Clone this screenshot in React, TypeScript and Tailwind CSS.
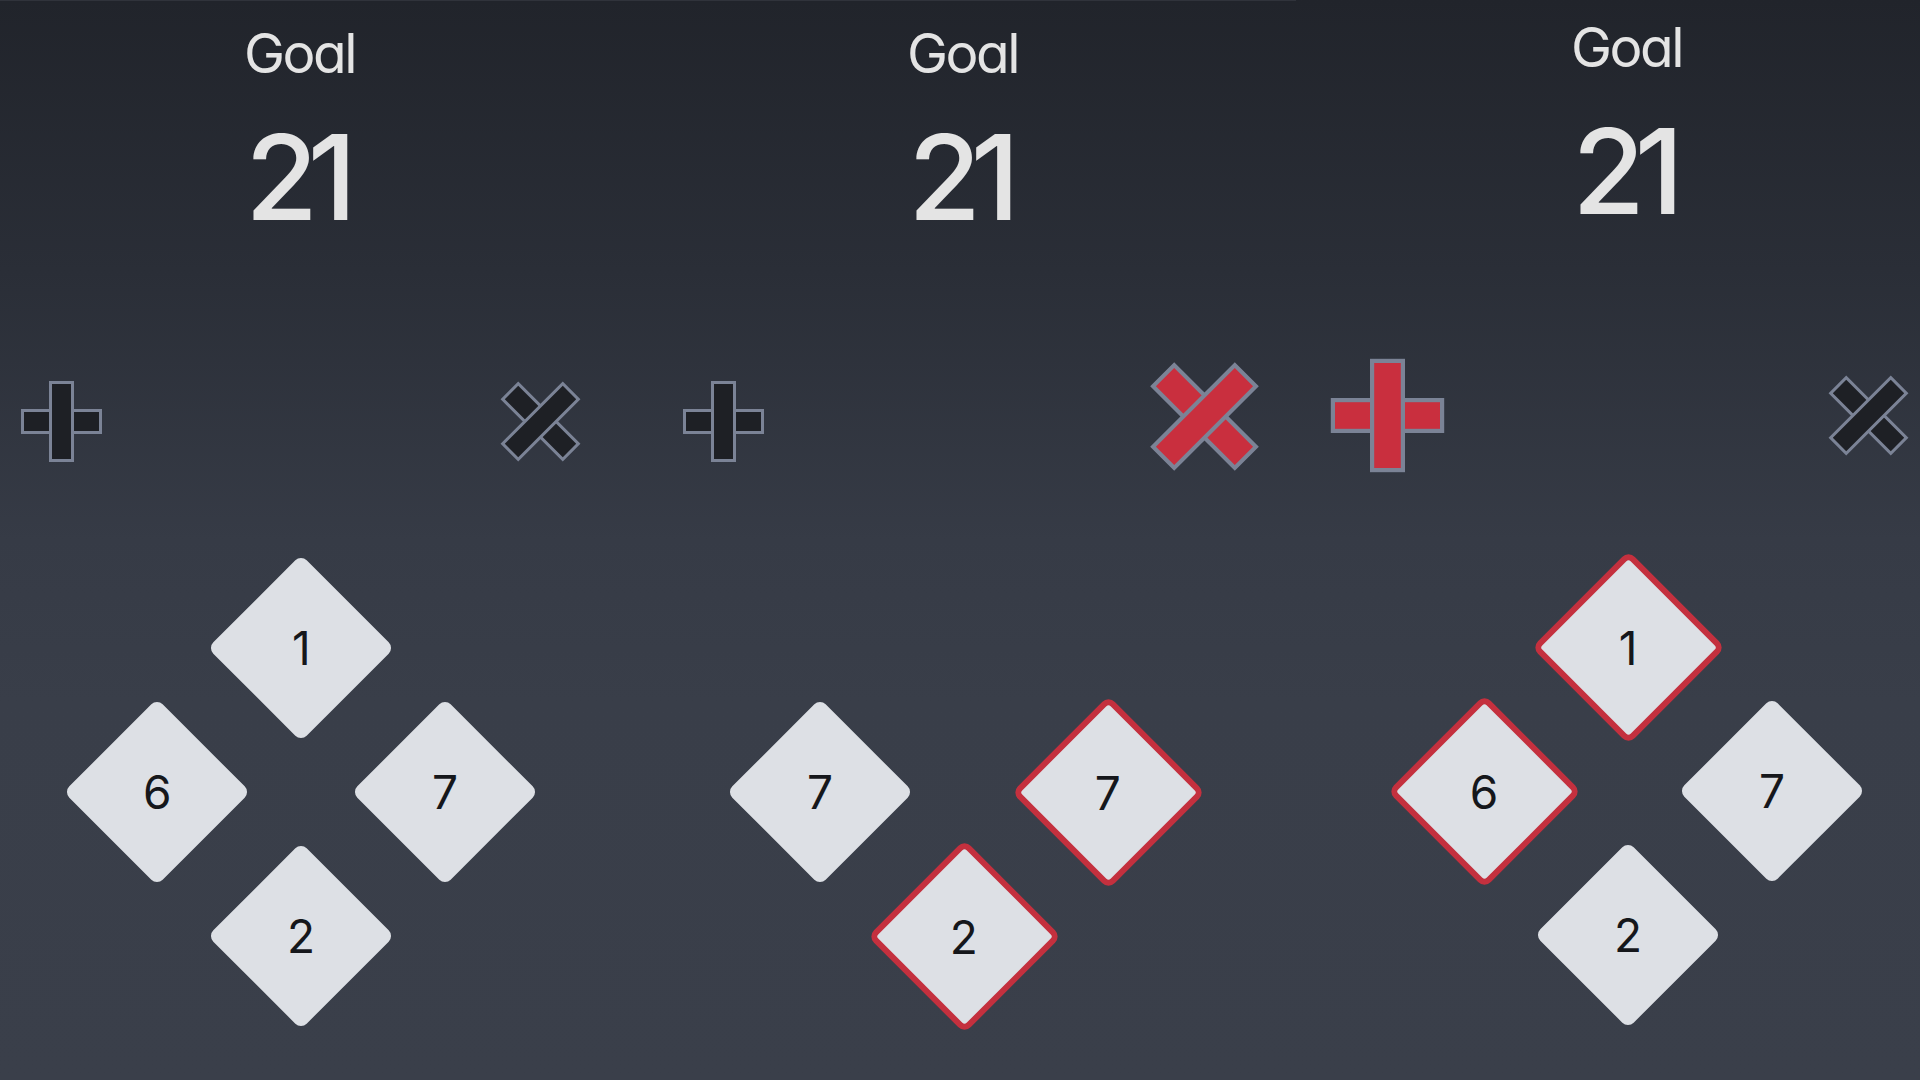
import React from "react";

type Tile = { n: number; sel?: boolean } | null;

const STROKE = "#7b8396";
const DARK = "#1e2025";
const RED = "#c92f3e";

function PlusIcon({ active }: { active?: boolean }) {
  const fill = active ? RED : DARK;
  return (
    <svg width="81" height="81" viewBox="0 0 81 81" overflow="visible">
      <rect x="1.5" y="29.5" width="78" height="22" fill={fill} stroke={STROKE} strokeWidth="3" />
      <rect x="29.5" y="1.5" width="22" height="78" fill={fill} stroke={STROKE} strokeWidth="3" />
    </svg>
  );
}

function TimesIcon({ active }: { active?: boolean }) {
  const fill = active ? RED : DARK;
  return (
    <svg width="81" height="81" viewBox="0 0 81 81" overflow="visible">
      <rect x="-2" y="29.5" width="85" height="22" fill={fill} stroke={STROKE} strokeWidth="3" transform="rotate(45 40.5 40.5)" />
      <rect x="-2" y="29.5" width="85" height="22" fill={fill} stroke={STROKE} strokeWidth="3" transform="rotate(-45 40.5 40.5)" />
    </svg>
  );
}

function Diamond({ tile }: { tile: Tile }) {
  if (!tile) return <div />;
  return (
    <div className="flex items-center justify-center">
      <div
        className={
          tile.sel
            ? "flex h-[137px] w-[137px] shrink-0 rotate-45 items-center justify-center rounded-[9px] border-[6px] border-[#c4303e] bg-[#dde0e5]"
            : "flex h-[132px] w-[132px] shrink-0 rotate-45 items-center justify-center rounded-[8px] bg-[#dde0e5]"
        }
      >
        <span className="-rotate-45 text-[46px] leading-none font-normal text-[#15171b]">{tile.n}</span>
      </div>
    </div>
  );
}

function Panel({
  first,
  topLine,
  shifted,
  plusActive,
  timesActive,
  tiles,
}: {
  first?: boolean;
  topLine?: boolean;
  shifted?: boolean;
  plusActive?: boolean;
  timesActive?: boolean;
  tiles: [Tile, Tile, Tile, Tile];
}) {
  const [top, left, right, bottom] = tiles;
  const cells: Tile[] = [null, top, null, left, null, right, null, bottom, null];
  return (
    <div
      className={
        (first ? "ml-[-30px] w-[662px] " : "w-[664px] ") +
        (topLine ? "border-t border-[#30333b] " : "") +
        "flex h-[1080px] shrink-0 flex-col items-center bg-[linear-gradient(to_bottom,#21242b_0%,#2a2e37_25%,#363b46_50%,#393e49_65%,#3a3f4a_100%)] text-[#e4e4e4]"
      }
    >
      <div className={shifted ? "pt-[20px]" : "pt-[25px]"} />
      <div className="ml-[-3px] h-[58px] text-[55px] leading-none tracking-[-2.5px]">Goal</div>
      <div className="mt-[34px] ml-[-10px] h-[118px] text-[118px] leading-none font-medium tracking-[-10px]">21</div>
      <div className="mt-[125px] flex h-[120px] w-full items-center justify-between px-[51px]">
        <div className={plusActive ? "scale-[1.4]" : ""}>
          <PlusIcon active={plusActive} />
        </div>
        <div className={timesActive ? "-translate-y-[5px] scale-[1.36]" : ""}>
          <TimesIcon active={timesActive} />
        </div>
      </div>
      <div className={(shifted ? "mt-[100px] " : "mt-[95px] ") + "grid grid-cols-[144px_144px_144px] grid-rows-[144px_144px_144px]"}>
        {cells.map((c, i) => (
          <Diamond key={i} tile={c} />
        ))}
      </div>
    </div>
  );
}

export default function App() {
  return (
    <div className="flex h-[1080px] w-[1920px] overflow-hidden bg-[#2c3039] font-['Inter',sans-serif] [font-feature-settings:'cv11']">
      <Panel first topLine tiles={[{ n: 1 }, { n: 6 }, { n: 7 }, { n: 2 }]} />
      <Panel topLine timesActive tiles={[null, { n: 7 }, { n: 7, sel: true }, { n: 2, sel: true }]} />
      <Panel shifted plusActive tiles={[{ n: 1, sel: true }, { n: 6, sel: true }, { n: 7 }, { n: 2 }]} />
    </div>
  );
}
